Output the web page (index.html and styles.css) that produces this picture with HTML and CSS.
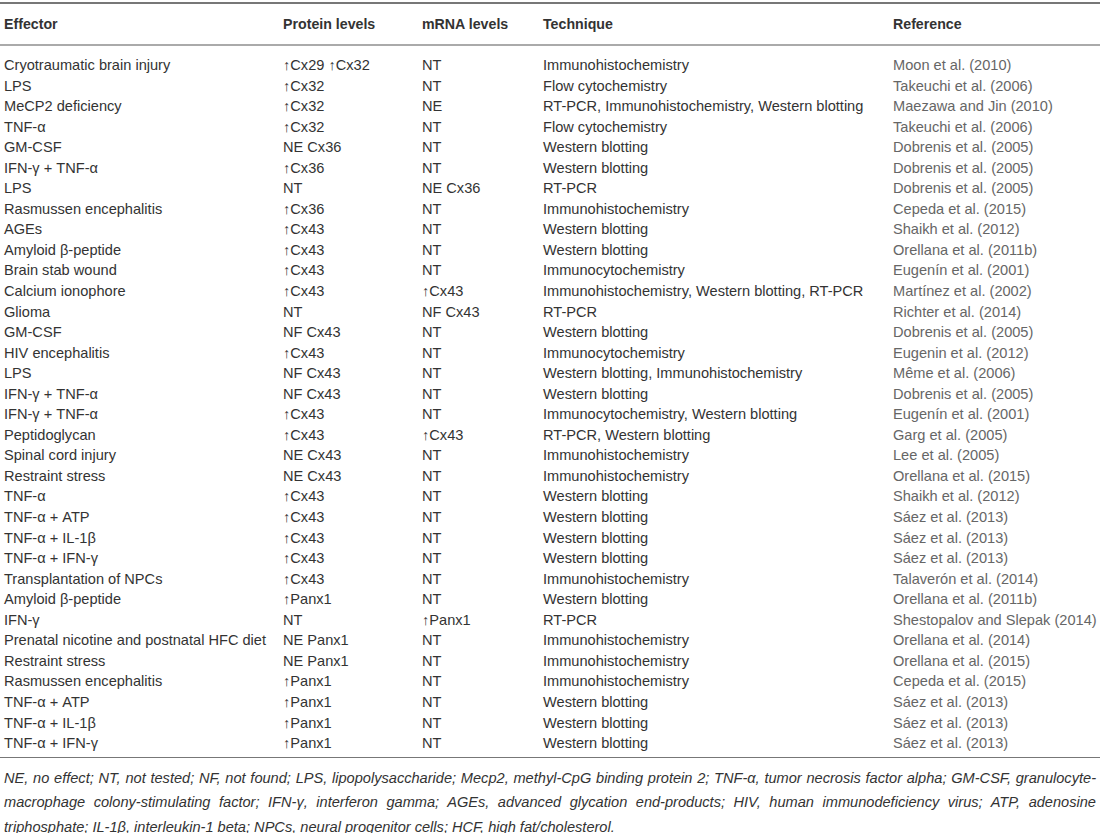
FILE: index.html
```html
<!DOCTYPE html>
<html>
<head>
	<meta charset="utf-8">
	<title>Effectors of connexin and pannexin expression</title>
	<link rel="stylesheet" href="styles.css">
</head>
<body>
	<table class="data">
		<thead>
			<tr>
				<th class="c-eff">Effector</th>
				<th class="c-prot">Protein levels</th>
				<th class="c-mrna">mRNA levels</th>
				<th class="c-tech">Technique</th>
				<th class="c-ref">Reference</th>
			</tr>
		</thead>
		<tbody>
			<tr><td>Cryotraumatic brain injury</td><td>↑Cx29 ↑Cx32</td><td>NT</td><td>Immunohistochemistry</td><td class="ref">Moon et al. (2010)</td></tr>
			<tr><td>LPS</td><td>↑Cx32</td><td>NT</td><td>Flow cytochemistry</td><td class="ref">Takeuchi et al. (2006)</td></tr>
			<tr><td>MeCP2 deficiency</td><td>↑Cx32</td><td>NE</td><td>RT-PCR, Immunohistochemistry, Western blotting</td><td class="ref">Maezawa and Jin (2010)</td></tr>
			<tr><td>TNF-α</td><td>↑Cx32</td><td>NT</td><td>Flow cytochemistry</td><td class="ref">Takeuchi et al. (2006)</td></tr>
			<tr><td>GM-CSF</td><td>NE Cx36</td><td>NT</td><td>Western blotting</td><td class="ref">Dobrenis et al. (2005)</td></tr>
			<tr><td>IFN-γ + TNF-α</td><td>↑Cx36</td><td>NT</td><td>Western blotting</td><td class="ref">Dobrenis et al. (2005)</td></tr>
			<tr><td>LPS</td><td>NT</td><td>NE Cx36</td><td>RT-PCR</td><td class="ref">Dobrenis et al. (2005)</td></tr>
			<tr><td>Rasmussen encephalitis</td><td>↑Cx36</td><td>NT</td><td>Immunohistochemistry</td><td class="ref">Cepeda et al. (2015)</td></tr>
			<tr><td>AGEs</td><td>↑Cx43</td><td>NT</td><td>Western blotting</td><td class="ref">Shaikh et al. (2012)</td></tr>
			<tr><td>Amyloid β-peptide</td><td>↑Cx43</td><td>NT</td><td>Western blotting</td><td class="ref">Orellana et al. (2011b)</td></tr>
			<tr><td>Brain stab wound</td><td>↑Cx43</td><td>NT</td><td>Immunocytochemistry</td><td class="ref">Eugenín et al. (2001)</td></tr>
			<tr><td>Calcium ionophore</td><td>↑Cx43</td><td>↑Cx43</td><td>Immunohistochemistry, Western blotting, RT-PCR</td><td class="ref">Martínez et al. (2002)</td></tr>
			<tr><td>Glioma</td><td>NT</td><td>NF Cx43</td><td>RT-PCR</td><td class="ref">Richter et al. (2014)</td></tr>
			<tr><td>GM-CSF</td><td>NF Cx43</td><td>NT</td><td>Western blotting</td><td class="ref">Dobrenis et al. (2005)</td></tr>
			<tr><td>HIV encephalitis</td><td>↑Cx43</td><td>NT</td><td>Immunocytochemistry</td><td class="ref">Eugenin et al. (2012)</td></tr>
			<tr><td>LPS</td><td>NF Cx43</td><td>NT</td><td>Western blotting, Immunohistochemistry</td><td class="ref">Même et al. (2006)</td></tr>
			<tr><td>IFN-γ + TNF-α</td><td>NF Cx43</td><td>NT</td><td>Western blotting</td><td class="ref">Dobrenis et al. (2005)</td></tr>
			<tr><td>IFN-γ + TNF-α</td><td>↑Cx43</td><td>NT</td><td>Immunocytochemistry, Western blotting</td><td class="ref">Eugenín et al. (2001)</td></tr>
			<tr><td>Peptidoglycan</td><td>↑Cx43</td><td>↑Cx43</td><td>RT-PCR, Western blotting</td><td class="ref">Garg et al. (2005)</td></tr>
			<tr><td>Spinal cord injury</td><td>NE Cx43</td><td>NT</td><td>Immunohistochemistry</td><td class="ref">Lee et al. (2005)</td></tr>
			<tr><td>Restraint stress</td><td>NE Cx43</td><td>NT</td><td>Immunohistochemistry</td><td class="ref">Orellana et al. (2015)</td></tr>
			<tr><td>TNF-α</td><td>↑Cx43</td><td>NT</td><td>Western blotting</td><td class="ref">Shaikh et al. (2012)</td></tr>
			<tr><td>TNF-α + ATP</td><td>↑Cx43</td><td>NT</td><td>Western blotting</td><td class="ref">Sáez et al. (2013)</td></tr>
			<tr><td>TNF-α + IL-1β</td><td>↑Cx43</td><td>NT</td><td>Western blotting</td><td class="ref">Sáez et al. (2013)</td></tr>
			<tr><td>TNF-α + IFN-γ</td><td>↑Cx43</td><td>NT</td><td>Western blotting</td><td class="ref">Sáez et al. (2013)</td></tr>
			<tr><td>Transplantation of NPCs</td><td>↑Cx43</td><td>NT</td><td>Immunohistochemistry</td><td class="ref">Talaverón et al. (2014)</td></tr>
			<tr><td>Amyloid β-peptide</td><td>↑Panx1</td><td>NT</td><td>Western blotting</td><td class="ref">Orellana et al. (2011b)</td></tr>
			<tr><td>IFN-γ</td><td>NT</td><td>↑Panx1</td><td>RT-PCR</td><td class="ref">Shestopalov and Slepak (2014)</td></tr>
			<tr><td>Prenatal nicotine and postnatal HFC diet</td><td>NE Panx1</td><td>NT</td><td>Immunohistochemistry</td><td class="ref">Orellana et al. (2014)</td></tr>
			<tr><td>Restraint stress</td><td>NE Panx1</td><td>NT</td><td>Immunohistochemistry</td><td class="ref">Orellana et al. (2015)</td></tr>
			<tr><td>Rasmussen encephalitis</td><td>↑Panx1</td><td>NT</td><td>Immunohistochemistry</td><td class="ref">Cepeda et al. (2015)</td></tr>
			<tr><td>TNF-α + ATP</td><td>↑Panx1</td><td>NT</td><td>Western blotting</td><td class="ref">Sáez et al. (2013)</td></tr>
			<tr><td>TNF-α + IL-1β</td><td>↑Panx1</td><td>NT</td><td>Western blotting</td><td class="ref">Sáez et al. (2013)</td></tr>
			<tr><td>TNF-α + IFN-γ</td><td>↑Panx1</td><td>NT</td><td>Western blotting</td><td class="ref">Sáez et al. (2013)</td></tr>
		</tbody>
	</table>
	<p class="note">NE, no effect; NT, not tested; NF, not found; LPS, lipopolysaccharide; Mecp2, methyl-CpG binding protein 2; TNF-α, tumor necrosis factor alpha; GM-CSF, granulocyte-macrophage colony-stimulating factor; IFN-γ, interferon gamma; AGEs, advanced glycation end-products; HIV, human immunodeficiency virus; ATP, adenosine triphosphate; IL-1β, interleukin-1 beta; NPCs, neural progenitor cells; HCF, high fat/cholesterol.</p>
</body>
</html>
```

FILE: styles.css
```css
body{margin: 0;background-color: #fff;color: #333;font-family: 'Liberation Sans', Arial, sans-serif;font-size: 14.6px;}
.data{width: 1100px;border-collapse: collapse;margin-top: 2px;table-layout: fixed;}
.data th, .data td{text-align: left;padding: 0 4px;white-space: nowrap;}
.data thead tr{border-top: 2px solid #777;border-bottom: 2px solid #aaa;}
.data th{font-weight: bold;font-size: 14.2px;height: 40px;line-height: 40px;color: #333;}
.data td{line-height: 20.55px;}
.data tbody tr:first-child td{padding-top: 9px;}
.data tbody tr:last-child td{padding-bottom: 3px;}
.data tbody{border-bottom: 1px solid #777;}
.c-eff{width: 271px;}
.c-prot{width: 131px;}
.c-mrna{width: 113px;}
.c-tech{width: 342px;}
.data td.ref{color: #666;}
.note{margin: 8px 4px 0 4px;font-style: italic;line-height: 24.6px;text-align: justify;color: #333;}
```
